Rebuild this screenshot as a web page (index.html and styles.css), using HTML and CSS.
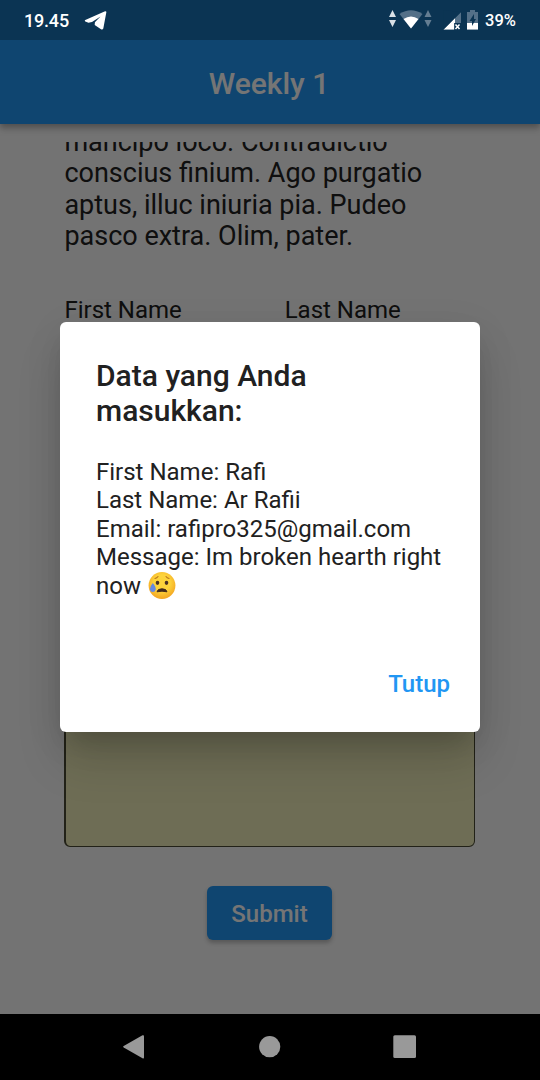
FILE: index.html
```html
<!DOCTYPE html>
<html lang="id">
<head>
<meta charset="utf-8">
<title>Weekly 1</title>
<link rel="stylesheet" href="styles.css">
</head>
<body>
<div class="phone">
  <header class="status">
    <span class="clock">19.45</span>
    <svg class="telegram" width="24" height="20" viewBox="0 0 24 20"><path d="M1.300 9.100 20.500.5Q22.600-.3 22.300 1.500L19.300 17.600Q18.600 19.200 17 18.300L10.700 14 10.900 11.300 16.500 5.500 8 10.900 4.500 11.800 1.300 10.400Q.3 9.800 1.300 9.100Z" fill="#fff"/></svg>
    <svg class="signals" width="92" height="22" viewBox="0 0 92 22">
      <path d="M4.500 0 8 7H1ZM1 10H8L4.500 17Z" fill="#d9e0e6"/>
      <path d="M11.500 4Q23-3.500 34.500 4L23 18.500Z" fill="#547088"/>
      <path d="M15.500 9Q23 4 30.500 9L23 18.500Z" fill="#fff"/>
      <path d="M40 0 43.500 7H36.500ZM36.500 10H43.500L40 17Z" fill="#647d92"/>
      <path d="M73 2V13H68V19.500H55.500Z" fill="#547088"/>
      <path d="M67 8V13H66V19.500H55.500Z" fill="#fff"/>
      <path d="M73 2 55.500 19.500V0Z" fill="#0b3453"/>
      <path d="M66.500 13H73V20H66.500Z" fill="#0b3453"/>
      <path d="m67.500 14.500 4 4.500m0-4.500-4 4.500" stroke="#fff" stroke-width="1.500"/>
      <path d="M79 2H82V0H87V2H90V19.500H79Z" fill="#547088"/>
      <path d="M79 13H90V19.500H79Z" fill="#fff"/>
      <path d="M86 4 81.500 11H84V16L88 9H86Z" fill="#0b3453"/>
    </svg>
    <span class="battery">39%</span>
  </header>
  <div class="app">
    <div class="appbar">Weekly 1</div>
    <main class="form">
      <div class="copy">
        <p>mancipo loco. Contradictio<br>conscius finium. Ago purgatio<br>aptus, illuc iniuria pia. Pudeo<br>pasco extra. Olim, pater.</p>
      </div>
      <div class="labels"><label>First Name</label><label>Last Name</label></div>
      <div class="message"></div>
      <button class="submit">Submit</button>
    </main>
  </div>
  <nav class="nav">
    <svg width="340" height="66" viewBox="100 0 340 66" fill="#999">
      <path d="M123.700 32 142.500 21.300Q144 20.700 144 22.200V43.400Q144 45 142.500 44.200L123.700 33.600Q122.300 32.800 123.700 32Z"/>
      <circle cx="269.700" cy="32.700" r="10.600"/>
      <rect x="393.300" y="21.300" width="22.700" height="22.700" rx="1.500"/>
    </svg>
  </nav>
  <div class="barrier">
    <section class="dialog">
      <h2>Data yang Anda masukkan:</h2>
      <p class="details">First Name: Rafi<br>Last Name: Ar Rafii<br>Email: rafipro325@gmail.com<br>Message: Im broken hearth right<br>now <svg class="emoji" width="28" height="28" viewBox="0 0 28 28">
        <defs><radialGradient id="face" cx=".5" cy=".4" r=".6"><stop offset=".5" stop-color="#fdd33b"/><stop offset="1" stop-color="#f3a421"/></radialGradient></defs>
        <circle cx="14" cy="13.500" r="13.400" fill="url(#face)"/>
        <path d="M7 6.500Q9 6 10 4.500M18 4.500Q19 6 21 6.500" fill="none" stroke="#b8741f" stroke-width="1.100" stroke-linecap="round"/>
        <ellipse cx="9.500" cy="10.800" rx="1.800" ry="2.100" fill="#4a3023"/>
        <ellipse cx="18.500" cy="10.800" rx="1.800" ry="2.100" fill="#4a3023"/>
        <path d="M9 19.800Q9.500 16.800 14 16.800T19 19.800Q14 18.500 9 19.800Z" fill="#42291b" stroke="#42291b" stroke-linejoin="round"/>
        <path d="M4.800 11Q8 14.500 7.700 17.500Q7.200 20 4.700 20T1.900 17.400Q2 14.200 4.800 11Z" fill="#6488df"/>
      </svg></p>
      <button class="close">Tutup</button>
    </section>
  </div>
</div>
</body>
</html>
```
FILE: styles.css
```css
* { box-sizing: border-box; }
body { margin: 0; font-family: Roboto, "Liberation Sans", sans-serif; }
p, h2 { margin: 0; }
button { border: 0; font: inherit; }
.phone { position: relative; width: 540px; height: 1080px; overflow: hidden; display: flex; flex-direction: column; background: #fafafa; }
.status { position: relative; z-index: 3; height: 40px; flex: none; padding: 1px 24px 0; display: flex; align-items: center; background: #0b3453; color: #fff; font-weight: 500; }
.clock { font-size: 18px; letter-spacing: -.2px; }
.telegram { margin-left: 15px; }
.signals { margin-left: auto; }
.battery { margin-left: 5px; font-size: 16.5px; }
.app { flex: 1; min-height: 0; display: flex; flex-direction: column; }
.appbar { height: 84px; flex: none; display: grid; place-items: center; padding: 2px 2px 0 0; background: #2196f3; color: #fff; font-size: 30px; font-weight: 500; box-shadow: 0 3px 6px rgba(0,0,0,.24), 0 6px 7px rgba(0,0,0,.1); }
.form { display: flex; flex-direction: column; padding: 18px 65px 0 64px; color: #212121; }
.copy { height: 111px; overflow: hidden; display: flex; align-items: flex-end; padding-left: .4px; font-size: 27px; line-height: 31.6px; }
.labels { margin-top: 43px; display: grid; grid-template-columns: 1fr 1fr; column-gap: 30px; padding-left: .4px; font-size: 24px; line-height: 28px; }
.message { height: 415px; margin-top: 108px; border: 1.5px solid #4b4b35; border-left-width: 2px; border-radius: 6px; background: #f0eeba; }
.submit { width: 125px; height: 54px; margin: 39px 0 0 143px; padding-top: 3px; border-radius: 6px; background: #2196f3; color: #fff; font-size: 24px; font-weight: 500; box-shadow: 0 3px 4px rgba(0,0,0,.24); }
.nav { position: relative; z-index: 3; height: 66px; flex: none; display: flex; justify-content: center; background: #000; }
.barrier { position: absolute; z-index: 2; inset: 0; padding: 322px 60px 0; background: rgba(0,0,0,.54); }
.dialog { height: 410px; display: flex; flex-direction: column; padding: 37px 30px 28px 36px; border-radius: 6px; background: #fff; color: #212121; box-shadow: 0 16px 22px -10px rgba(0,0,0,.13), 0 30px 48px -2px rgba(0,0,0,.14), 0 8px 40px 0 rgba(0,0,0,.07); }
.dialog h2 { width: 260px; font-size: 30px; line-height: 34.5px; font-weight: 500; }
.details { margin-top: 30px; font-size: 24px; line-height: 28.4px; white-space: nowrap; }
.emoji { display: inline-block; margin-left: 1px; vertical-align: -6px; }
.close { margin: auto 0 0 auto; padding: 0; background: none; color: #2196f3; font-size: 24px; line-height: 40px; font-weight: 500; }
```
